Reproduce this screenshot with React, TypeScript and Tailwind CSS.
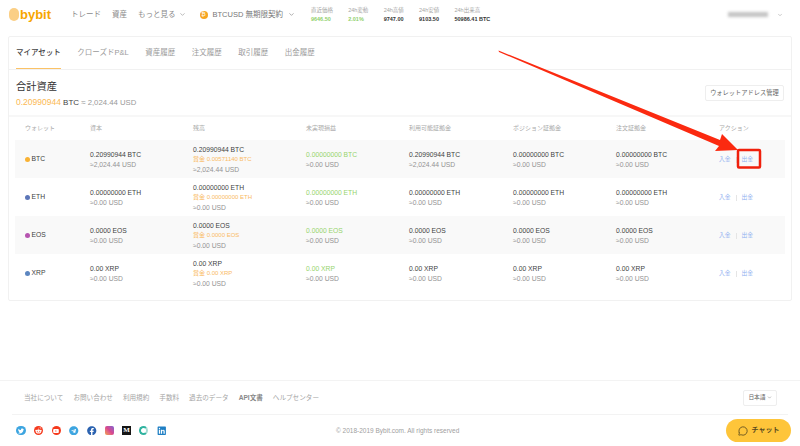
import { ChevronDown, MessageCircle } from 'lucide-react';
import {
  FaFacebook,
  FaLinkedin,
  FaRedditAlien,
  FaTelegram,
  FaTwitter,
  FaYoutube,
} from 'react-icons/fa';

const font = { fontFamily: '"Liberation Sans", "Noto Sans CJK JP", sans-serif' };

const tabs = ['クローズドP&L', '資産履歴', '注文履歴', '取引履歴', '出金履歴'];
const footerLinks = ['当社について', 'お問い合わせ', '利用規約', '手数料', '過去のデータ', 'API文書', 'ヘルプセンター'];
const heads = ['ウォレット', '資本', '残高', '未実現損益', '利用可能証拠金', 'ポジション証拠金', '注文証拠金', 'アクション'];

const stats = [
  { label: '直近価格', value: '9646.50', color: 'text-[#8fd06a]' },
  { label: '24h変動', value: '2.01%', color: 'text-[#8fd06a]' },
  { label: '24h高値', value: '9747.00', color: 'text-[#333]' },
  { label: '24h安値', value: '9103.50', color: 'text-[#333]' },
  { label: '24h出来高', value: '50986.41 BTC', color: 'text-[#333]' },
];

const rows = [
  { coin: 'BTC', dot: 'bg-[#f9b233]', amount: '0.20990944', zero: '0.00000000', bonus: '0.00571140', usd: '2,024.44', striped: true },
  { coin: 'ETH', dot: 'bg-[#5c76b8]', amount: '0.00000000', zero: '0.00000000', bonus: '0.00000000', usd: '0.00', striped: false },
  { coin: 'EOS', dot: 'bg-[#b655b0]', amount: '0.0000', zero: '0.0000', bonus: '0.0000', usd: '0.00', striped: true },
  { coin: 'XRP', dot: 'bg-[#5c86c0]', amount: '0.00', zero: '0.00', bonus: '0.00', usd: '0.00', striped: false },
];

const gridCols = 'grid-cols-[65px_103px_113px_103px_104px_103px_103px_1fr]';

const Cell = ({ top, usd, topColor = 'text-[#3f3f3f]' }: { top: string; usd: string; topColor?: string }) => (
  <div className="flex flex-col gap-[2.5px] leading-[7.5px]">
    <span className={topColor}>{top}</span>
    <span className="text-[#939393]">≈{usd} USD</span>
  </div>
);

const App = () => {
  return (
    <div style={font} className="relative flex h-[446px] w-[800px] flex-col overflow-hidden bg-white">
      {/* Header */}
      <header className="flex h-[36px] shrink-0 items-center pb-[7px] pl-[9px] pr-[17px]">
        <div className="flex w-[62px] items-center gap-[1px]">
          <span className="h-[13px] w-[10px] rounded-[5px] bg-[#fbcf85]" />
          <span className="text-[13px] font-bold leading-none text-[#f7a600]">bybit</span>
        </div>
        <nav className="flex items-center gap-[11px] text-[7.5px] text-[#8a8a8a]">
          <span>トレード</span>
          <span>資産</span>
          <span className="flex items-center gap-[3px]">
            もっと見る <ChevronDown className="h-[7px] w-[7px]" />
          </span>
        </nav>
        <div className="ml-[14px] flex items-center gap-[5px] text-[7.5px] text-[#777]">
          <span className="flex h-[8px] w-[8px] items-center justify-center rounded-full bg-[#f7a521] text-[6px] text-white">₿</span>
          <span>BTCUSD 無期限契約</span>
          <ChevronDown className="h-[7px] w-[7px]" />
        </div>
        <div className="ml-[16px] flex gap-[15.25px]">
          {stats.map((s) => (
            <div key={s.label} className="flex flex-col gap-[3px]">
              <span className="text-[5.5px] leading-[6px] text-[#a5a5a5]">{s.label}</span>
              <span className={`text-[5.5px] font-bold leading-[6px] ${s.color}`}>{s.value}</span>
            </div>
          ))}
        </div>
        <div className="ml-auto flex items-center gap-[9px] text-[#999]">
          <span className="h-[5px] w-[40px] bg-[#c4c4c4] blur-[1.5px]" />
          <ChevronDown className="h-[6px] w-[6px]" />
        </div>
      </header>

      {/* Card */}
      <main className="mx-[8px] h-[265px] shrink-0 rounded-[2px] border border-[#f1f1f1]">
        <div className="flex h-[33px] gap-[16.5px] border-b border-[#f1f1f1] pl-[7px] text-[7.5px] text-[#9a9a9a]">
          <span className="flex items-center border-b-[1.5px] border-[#fbc266] font-medium text-[#444]">マイアセット</span>
          {tabs.map((t) => (
            <span key={t} className="flex items-center">{t}</span>
          ))}
        </div>

        <div className="flex h-[47px] items-center justify-between border-b-2 border-[#f7f7f7] px-[7px]">
          <div className="mt-[2px] flex flex-col gap-[5px]">
            <span className="text-[10.25px] leading-[12px] text-[#333]">合計資産</span>
            <span className="text-[7.75px] leading-[9px] text-[#999]">
              <span className="text-[8.5px] text-[#fbb953]">0.20990944</span>{' '}
              <span className="text-[8px] text-[#444]">BTC</span> ≈ 2,024.44 USD
            </span>
          </div>
          <button className="flex h-[16px] w-[79px] items-center justify-center rounded-[2px] border border-[#eeeeee] text-[6.25px] text-[#666]">
            ウォレットアドレス管理
          </button>
        </div>

        <div className="px-[6px] text-[6.75px]">
          <div className={`grid h-[23px] items-center pl-[10px] text-[6px] text-[#aaa] ${gridCols}`}>
            {heads.map((h) => (
              <span key={h}>{h}</span>
            ))}
          </div>
          {rows.map((r) => (
            <div
              key={r.coin}
              className={`grid h-[38px] items-center pl-[10px] pt-[1px] ${gridCols} ${r.striped ? 'bg-[#f9f9f9]' : ''}`}
            >
              <span className="flex items-center gap-[2px] text-[#3f3f3f]">
                <span className={`h-[4.5px] w-[4.5px] rounded-full ${r.dot}`} />
                {r.coin}
              </span>
              <Cell top={`${r.amount} ${r.coin}`} usd={r.usd} />
              <div className="flex flex-col gap-[2.5px] leading-[7.5px]">
                <span className="text-[#3f3f3f]">{r.amount} {r.coin}</span>
                <span className="text-[6px] text-[#f9bb66]">賞金 {r.bonus} {r.coin}</span>
                <span className="text-[#939393]">≈{r.usd} USD</span>
              </div>
              <Cell top={`${r.zero} ${r.coin}`} usd="0.00" topColor="text-[#96d46c]" />
              <Cell top={`${r.amount} ${r.coin}`} usd={r.usd} />
              <Cell top={`${r.zero} ${r.coin}`} usd="0.00" />
              <Cell top={`${r.zero} ${r.coin}`} usd="0.00" />
              <div className="flex items-center gap-[5px] text-[5.75px] text-[#8fb0f0]">
                <span>入金</span>
                <span className="h-[6px] w-px bg-[#e5e5e5]" />
                <span>出金</span>
              </div>
            </div>
          ))}
        </div>
      </main>

      {/* Footer */}
      <footer className="mt-auto flex flex-col">
        <div className="flex h-[34px] items-center gap-[10px] border-t border-[#f3f3f3] pl-[24px] pr-[23px] text-[6.6px] text-[#a5a5a5]">
          {footerLinks.map((l) => (
            <span key={l} className={l === 'API文書' ? 'font-bold text-[#888]' : ''}>{l}</span>
          ))}
          <span className="ml-auto flex h-[16px] w-[34px] items-center justify-center gap-[1px] rounded-[2px] border border-[#eeeeee] text-[5.75px] text-[#666]">
            日本語 <ChevronDown className="h-[5px] w-[5px]" />
          </span>
        </div>
        <div className="relative mx-[12px] flex h-[32px] items-center border-t border-[#f3f3f3]">
          <div className="ml-[4px] flex items-center gap-[8.25px]">
            <span className="flex h-[9.5px] w-[9.5px] items-center justify-center rounded-full bg-[#3da5e0] text-[6px] text-white"><FaTwitter /></span>
            <span className="flex h-[9.5px] w-[9.5px] items-center justify-center rounded-full bg-[#f5391c] text-[7px] text-white"><FaRedditAlien /></span>
            <span className="flex h-[9.5px] w-[9.5px] items-center justify-center rounded-full bg-[#f5391c] text-[6px] text-white"><FaYoutube /></span>
            <FaTelegram className="h-[9.5px] w-[9.5px] text-[#3da5e0]" />
            <FaFacebook className="h-[9.5px] w-[9.5px] text-[#2b62b0]" />
            <span className="h-[9px] w-[9px] rounded-[2px] bg-gradient-to-tr from-[#f2a23c] via-[#d9468f] to-[#7a5bd0]" />
            <span className="flex h-[9px] w-[9px] items-center justify-center bg-[#151515] text-[7px] font-bold leading-none text-white" style={{ fontFamily: '"Liberation Serif", serif' }}>M</span>
            <span className="h-[9px] w-[9px] rounded-full border-[2.5px] border-[#2fb3a0] border-r-[#a5dcd3]" />
            <FaLinkedin className="h-[9.5px] w-[9.5px] text-[#1f7fc4]" />
          </div>
          <span className="absolute left-[324px] text-[6.5px] text-[#a0a0a0]">© 2018-2019 Bybit.com. All rights reserved</span>
        </div>
      </footer>

      {/* Chat button */}
      <button className="absolute left-[726px] top-[419px] flex h-[23px] w-[65px] items-center justify-center gap-[4px] rounded-full bg-[#fec53a] text-[7px] font-bold text-[#5a4a20]">
        <MessageCircle className="h-[10px] w-[10px]" />
        チャット
      </button>

      {/* Annotation */}
      <svg className="absolute left-0 top-0" width="800" height="446" viewBox="0 0 800 446">
        <polygon points="498.5,50.5 499,52 719,146 715,151 738,150 722,134 720,140" fill="#fb2a10" />
        <rect x="738" y="150" width="22" height="17.5" fill="none" stroke="#f0200c" strokeWidth="2.5" rx="1" />
      </svg>
    </div>
  );
};

export default App;
